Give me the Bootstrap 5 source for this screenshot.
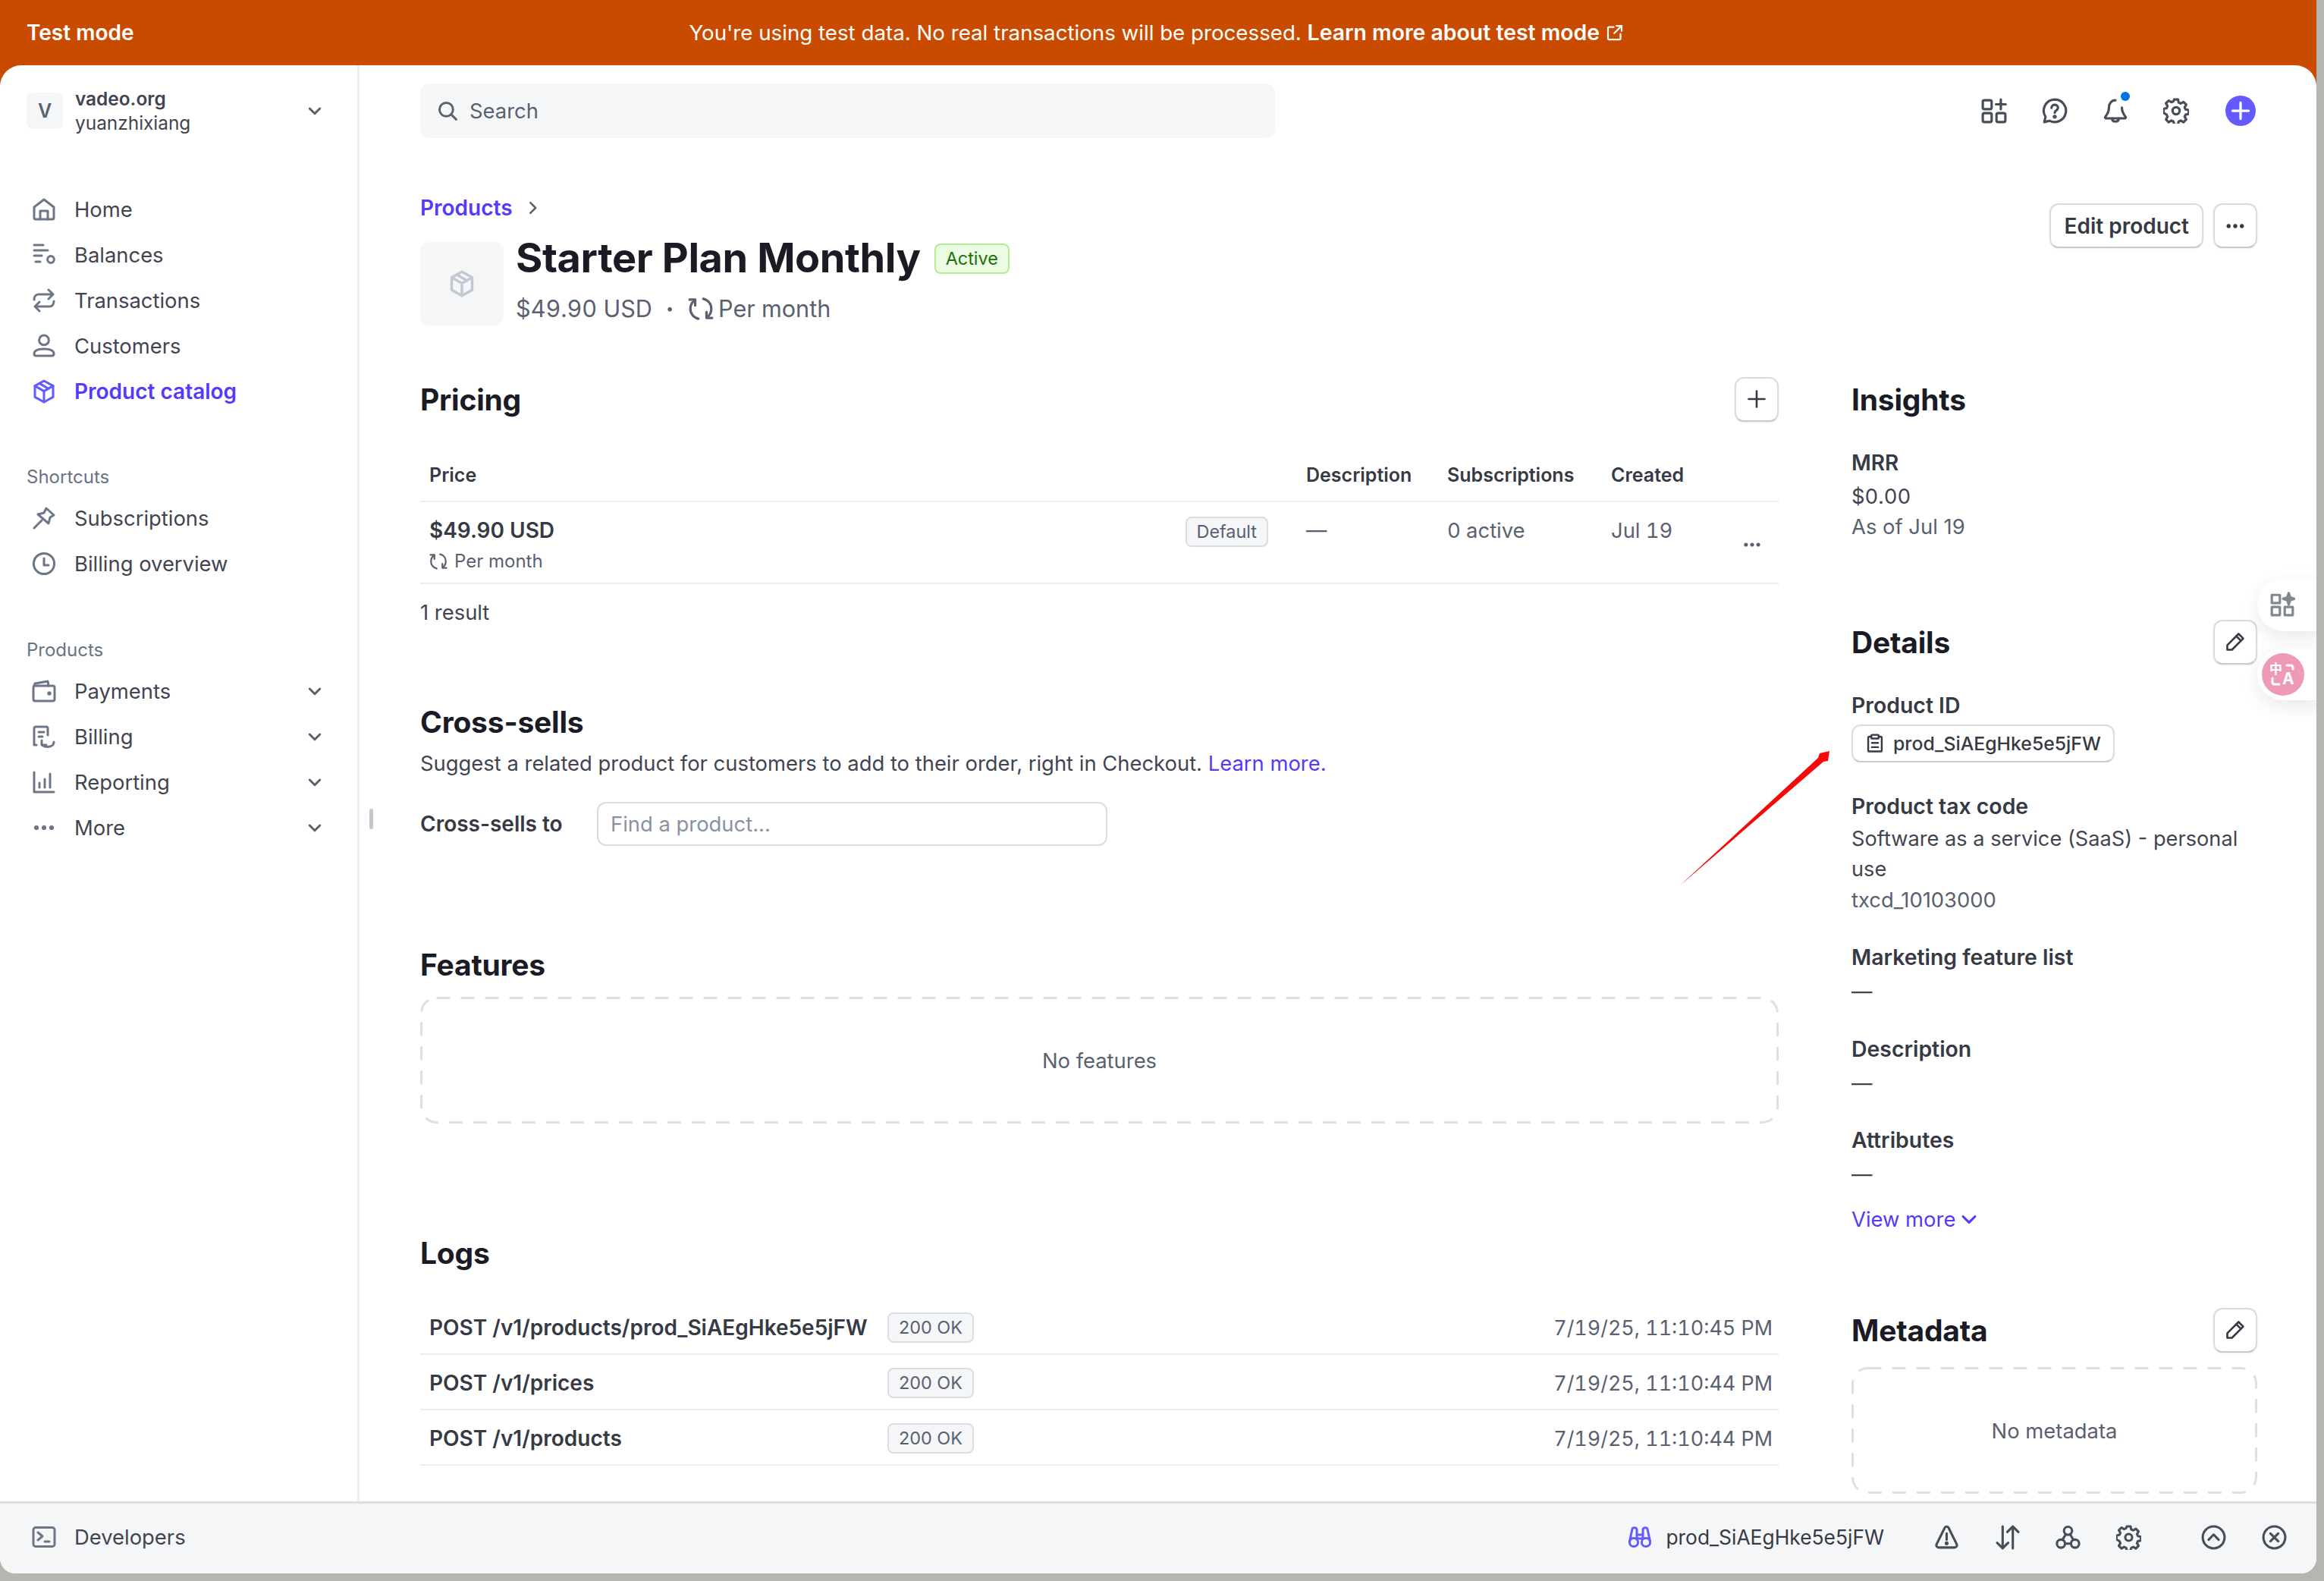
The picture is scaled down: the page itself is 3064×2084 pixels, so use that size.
<!DOCTYPE html>
<html lang="en">
<head>
<meta charset="utf-8">
<title>Starter Plan Monthly</title>
<link href="https://cdn.jsdelivr.net/npm/bootstrap@5.3.0/dist/css/bootstrap.min.css" rel="stylesheet">
<style>
html,body{height:100%;margin:0;overflow:hidden}
body{background:#b4b6b2;font-family:Inter,"Liberation Sans",sans-serif;font-size:27.4px;line-height:40px;color:#414552}
.nums{font-variant-numeric:tabular-nums}
svg.ic{fill:none;stroke:currentColor;stroke-width:1.5;stroke-linecap:round;stroke-linejoin:round;flex:none;display:block}
.app-window{width:3054px;height:2074px;background:#c94b00;border-bottom-left-radius:20px;border-bottom-right-radius:20px;overflow:hidden;position:relative}
.mode-bar{height:86px;color:#fff;padding-left:35px;position:relative;font-size:27.7px}
.mode-label{font-weight:600;font-size:28px}
.mode-msg{flex:1;text-align:center;padding-right:35px;margin-left:-146px}
.mode-msg b{font-weight:600;font-size:28.4px}
.shell{height:1988px;background:#fff;border-radius:28px 28px 0 0;overflow:hidden}
.middle{height:1893px;overflow:hidden}
.side-col{width:474px;flex:none;border-right:3px solid #ebeef1;padding-left:35px;position:relative}
.acct{height:48px;margin-top:36px;margin-bottom:76px;padding-right:44px}
.acct-tile{width:48px;height:48px;background:#f5f6f8;border-radius:8px;font-weight:600;font-size:25px;color:#596171;margin-right:16px}
.acct-text{font-size:24.4px;line-height:32px}
.acct-text b{font-weight:600;color:#414552;display:block}
.acct-text span{display:block}
.nav-line{height:60px;color:#414552;text-decoration:none;padding-left:7px;padding-right:44px}
.nav-line svg.ic{color:#6c7688;width:32px;height:32px;margin-right:24px}
.nav-line svg.chev{width:24px;height:24px;margin:0 0 0 auto;color:#596171;stroke-width:2}
.nav-line.on{color:#533afd;font-weight:600;font-size:28px}
.nav-line.on svg.ic{color:#635bff}
.side-label{font-size:24px;color:#687385;height:40px;line-height:40px;margin-bottom:4px}
.side-shortcuts{margin-top:63px}
.side-products{margin-top:64px}
.side-handle{position:absolute;left:487px;top:980px;width:5px;height:27px;background:#c3c8cf;border-radius:3px}
.main-col{flex:1;min-width:0;padding:24px 78px 0 80px;position:relative}
.top-line{height:72px}
.search-box{width:1127px;height:72px;background:#f5f6f8;border-radius:12px;padding-left:23px;color:#596171}
.search-box svg{width:26px;height:26px;margin-right:16px;stroke-width:1.8}
.search-box input{border:0;background:transparent;box-shadow:none;padding:0;font-size:27.4px;height:72px;color:#596171}
.search-box input::placeholder{color:#596171}
.tool-ic{color:#474e5a;width:34px;height:34px}
.tools{gap:46px;padding-right:2px}
.add-btn{width:40px;height:40px;border-radius:50%;background:#635bff;color:#fff;margin-left:2px}
.bell-wrap{position:relative;width:34px;height:34px}
.bell-dot{position:absolute;right:-2px;top:-8px;width:12px;height:12px;background:#0073e6;border-radius:50%}
.crumb{height:40px;margin-top:72px}
.crumb a{color:#533afd;font-weight:600;text-decoration:none;font-size:28px}
.crumb svg{width:22px;height:22px;margin-left:15px;color:#596171;stroke-width:1.8}
.head-line{margin-top:25px;height:110px}
.prod-tile{width:110px;height:110px;background:#f5f6f8;border-radius:12px;color:#c0c8d2;margin-right:16px}
.prod-tile svg{width:36px;height:36px}
.prod-title{font-size:54px;line-height:44px;font-weight:700;color:#1a1b25;letter-spacing:-.4px;margin-top:-1px;white-space:nowrap}
.tag-live{background:#ecfbe3;border:2px solid #b4ec93;color:#217005;font-size:23.4px;font-weight:400;border-radius:8px;padding:0 13px;height:40px;line-height:36px;margin-left:18px}
.prod-sub{font-size:30.6px;color:#596171;margin-top:25px;line-height:40px;font-variant-numeric:tabular-nums}
.prod-sub svg{width:34px;height:34px;margin-right:6px}
.sep-dot{margin:0 19px 0 18px;font-size:18px}
.act-btns{gap:13px;position:absolute;right:78px;top:182px}
.plain-btn{background:#fff;border:2px solid #d8dce2;border-bottom-color:#c6cbd3;border-radius:12px;font-weight:600;font-size:28px;line-height:40px;color:#353a44;height:59px;padding:0 17px;box-shadow:0 1px 2px rgba(0,0,0,.08)}
.icon-btn{width:58px;height:59px;padding:0;display:flex;align-items:center;justify-content:center}
.icon-btn svg{width:28px;height:28px}
.cols{margin-top:67px;gap:96px}
.left-pane{width:1791px;flex:none}
.right-pane{width:535px;flex:none}
.sec-head{height:60px;font-size:39px;line-height:61px;font-weight:700;color:#1a1b25;margin:0;letter-spacing:-.2px}
.tbl-price{table-layout:fixed;margin:35px 0 0;width:1791px}
.tbl-price th,.tbl-price td{padding:0;border-color:#ebeef1;border-bottom-width:2px;color:#414552;background:transparent;box-shadow:none}
.tbl-price th{height:70px;font-size:25px;font-weight:600;vertical-align:middle;color:#353a44}
.tbl-price td{height:108px;vertical-align:top;padding-top:17px;color:#596171}
.tbl-price .first{padding-left:12px}
.cell-price{font-weight:600;color:#353a44;font-size:28px}
.cell-per{font-size:24px;color:#596171;margin-top:1px;line-height:40px}
.cell-per svg{width:24px;height:24px;margin-right:9px}
.tag-soft{background:#f5f6f8;border:2px solid #d8dee4;border-radius:8px;color:#596171;font-size:23.4px;font-weight:400;height:40px;line-height:36px;padding:0 13px}
.tag-slot{margin-left:auto;margin-right:42px}
.row-more{width:26px;height:26px;color:#596171;margin-top:26px;margin-left:27px}
.result-line{margin-top:17px}
.cross-head{margin-top:94px}
.cross-sub{margin-top:5px;color:#414552}
.cross-sub a{color:#533afd;text-decoration:none}
.cross-row{margin-top:31px;height:58px}
.cross-label{font-weight:600;color:#353a44;width:233px;flex:none;font-size:28px}
.cross-input{width:673px;height:58px;border:2px solid #d8dce2;border-radius:12px;font-size:27.4px;padding:0 16px;color:#596171;box-shadow:none}
.cross-input::placeholder{color:#8792a2}
.feat-head{margin-top:126px}
.empty-box{position:relative;color:#596171}
.dash-line{position:absolute;left:0;top:0;fill:none;stroke:#dde1e6;stroke-width:3;stroke-dasharray:18 14}
.feat-box{margin-top:13px;height:167px}
.logs-head{margin-top:140px}
.log-list{margin-top:32px}
.log-line{height:73px;border-bottom:2px solid #ebeef1;padding:3px 8px 0 12px;font-weight:600;color:#353a44;font-size:28px}
.log-path{width:604px;flex:none;white-space:nowrap}
.log-time{margin-left:auto;font-weight:400;color:#596171;font-size:26.9px;font-variant-numeric:tabular-nums}
.insight-mrr{margin-top:34px;font-weight:600;color:#353a44;font-size:28px}
.val{color:#414552}
.val-gap{margin-top:4px}
.muted-val{color:#596171}
.detail-head{margin-top:103px;height:58px}
.detail-head .sec-head{height:58px;line-height:60px}
.det-label{font-weight:600;color:#353a44;margin-top:35px;font-size:28.4px}
.det-tax{margin-top:38px}
.det-plus{margin-top:36px}
.id-pill{display:inline-flex;align-items:center;height:50px;margin-top:5px;border:2px solid #d8dce2;border-bottom-color:#c6cbd3;border-radius:12px;padding:0 16px;font-size:24.8px;font-weight:500;color:#353a44}
.id-pill svg{width:26px;height:26px;margin-right:11px}
.tax-val{margin-top:3px;font-size:27.2px}
.dash-val{margin-top:5px}
.view-link{color:#533afd;text-decoration:none;margin-top:19px}
.view-link svg{width:28px;height:28px;margin-left:4px;stroke-width:1.8}
.meta-head{margin-top:97px}
.meta-box{margin-top:20px;height:167px}
.dev-bar{height:95px;background:#f5f6f8;border-top:3px solid #d8dee4;padding:0 39px 4px 42px}
.dev-left svg{width:32px;height:32px;margin-right:24px;color:#6c7688}
.dev-id{color:#353a44;margin-right:66px;font-size:26.4px}
.dev-id svg{width:32px;height:32px;color:#635bff;margin-right:18px}
.dev-tools{gap:47px}
.dev-tools svg{width:33px;height:33px;color:#474e5a}
.dev-end{margin-left:32px}
.float-card{position:absolute;right:-10px;background:#fff;box-shadow:0 8px 24px rgba(0,0,0,.09);width:88px}
.float-a{top:762px;height:70px;border-radius:36px 0 0 36px;padding-left:16px}
.float-b{top:855px;height:68px;border-radius:34px 0 0 34px;padding-left:6px}
.float-a svg{width:34px;height:34px;color:#7f8790}
.float-disc{position:relative;width:56px;height:56px;background:#ee9ab5;border-radius:50%;color:#fff;font-weight:700}
.float-disc svg{position:absolute;left:0;top:0;width:56px;height:56px;stroke-width:3}
.zh-char{position:absolute;left:10px;top:9px;font:700 17px/22px "Noto Sans CJK SC",sans-serif}
.en-char{position:absolute;left:27px;top:23px;font:700 21px/22px Inter,sans-serif}
.mark-arrow{position:absolute;left:2200px;top:980px;width:230px;height:200px;pointer-events:none}
</style>
</head>
<body>
<svg width="0" height="0" class="d-none" aria-hidden="true">
<symbol id="i-chev" viewBox="0 0 16 16"><path d="M3.500 6 8 10.500 12.500 6"/></symbol>
<symbol id="i-dots" viewBox="0 0 16 16"><circle cx="3" cy="8" r=".8" fill="currentColor"/><circle cx="8" cy="8" r=".8" fill="currentColor"/><circle cx="13" cy="8" r=".8" fill="currentColor"/></symbol>
<symbol id="i-gear" viewBox="0 0 16 16"><circle cx="8" cy="8" r="2.200"/><path d="M6.800 1h2.400l.4 1.900 1.300.6 1.700-1 1.700 1.700-1 1.700.6 1.300 1.900.4v2.400l-1.900.4-.6 1.300 1 1.700-1.700 1.700-1.700-1-1.300.6-.4 1.900H6.800l-.4-1.900-1.300-.6-1.700 1-1.700-1.700 1-1.700-.6-1.300L.2 9.200V6.800l1.900-.4.6-1.300-1-1.700 1.700-1.700 1.700 1 1.300-.6z"/></symbol>
<symbol id="i-cycle" viewBox="0 0 16 16"><path d="M6.500 14.200C3.500 13.500 1.500 11 1.500 8c0-2.200 1-4.100 2.800-5.300"/><path d="M4.500 6V2.300H1"/><path d="M9.500 1.800c3 .7 5 3.200 5 6.200 0 2.200-1 4.100-2.800 5.300"/><path d="M11.500 10v3.700H15"/></symbol>
<symbol id="i-box" viewBox="0 0 16 16"><path d="M8 1l6 3.300v7.400L8 15l-6-3.300V4.300z"/><path d="M2 4.300 8 7.800l6-3.500M8 7.800V15M5 2.700l6 3.500"/></symbol>
<symbol id="i-pen" viewBox="0 0 16 16"><path d="M10.500 2 14 5.500 5.500 14H2v-3.500z"/><path d="M8.800 3.700l3.500 3.500"/></symbol>
<symbol id="i-clip" viewBox="0 0 16 16"><path d="M5 2.500H3.500a1 1 0 0 0-1 1v10a1 1 0 0 0 1 1h9a1 1 0 0 0 1-1v-10a1 1 0 0 0-1-1H11"/><rect x="5" y="1" width="6" height="3" rx=".8"/><path d="M5.500 7.500h5M5.500 11h5"/></symbol>
</svg>

<div class="app-window">
  <div class="mode-bar d-flex align-items-center">
    <span class="mode-label">Test mode</span>
    <div class="mode-msg d-flex align-items-center justify-content-center">You're using test data. No real transactions will be processed.&nbsp;<b>Learn more about test mode</b>
      <svg class="ic ms-2" width="24" height="24" viewBox="0 0 16 16"><path d="M7 3H3a1 1 0 0 0-1 1v9a1 1 0 0 0 1 1h9a1 1 0 0 0 1-1V9M9.500 2H14v4.500M14 2 7.500 8.500"/></svg>
    </div>
  </div>
  <div class="shell d-flex flex-column">
    <div class="middle d-flex">
      <aside class="side-col">
        <div class="acct d-flex align-items-center">
          <div class="acct-tile d-flex align-items-center justify-content-center">V</div>
          <div class="acct-text"><b>vadeo.org</b><span>yuanzhixiang</span></div>
          <svg class="ic ms-auto" style="width:24px;height:24px;stroke-width:2;color:#596171"><use href="#i-chev"/></svg>
        </div>
        <a class="nav-line d-flex align-items-center" href="#"><svg class="ic" viewBox="0 0 16 16"><path d="M1.500 6.500 8 1.500l6.500 5v7a1 1 0 0 1-1 1h-11a1 1 0 0 1-1-1z"/><path d="M5.500 14.500V9h5v5.500"/></svg>Home</a>
        <a class="nav-line d-flex align-items-center" href="#"><svg class="ic" viewBox="0 0 16 16"><path d="M1.500 1.500h6M1.500 5h9M1.500 8.500h5M2.500 12.500h3"/><circle cx="12.500" cy="11" r="2.200"/></svg>Balances</a>
        <a class="nav-line d-flex align-items-center" href="#"><svg class="ic" viewBox="0 0 16 16"><path d="M1.500 7.500c0-2 1-3.500 3-3.500h9.500M11 1l3 3-3 3M14.500 8.500c0 2-1 3.500-3 3.500H2M5 9l-3 3 3 3"/></svg>Transactions</a>
        <a class="nav-line d-flex align-items-center" href="#"><svg class="ic" viewBox="0 0 16 16"><circle cx="8" cy="4.200" r="3.200"/><path d="M1.500 13.300c0-2.300 3-3.300 6.500-3.300s6.500 1 6.500 3.300c0 .8-.4 1.200-1.200 1.200H2.700c-.8 0-1.200-.4-1.200-1.200z"/></svg>Customers</a>
        <a class="nav-line on d-flex align-items-center" href="#"><svg class="ic"><use href="#i-box"/></svg>Product catalog</a>

        <div class="side-label side-shortcuts">Shortcuts</div>
        <a class="nav-line d-flex align-items-center" href="#"><svg class="ic" viewBox="0 0 16 16"><path d="M9.500 1.500 14.500 6 12 7.500 11 11.500 4 5.500 8 4.500z"/><path d="M1.500 14.500 6.500 9.500"/></svg>Subscriptions</a>
        <a class="nav-line d-flex align-items-center" href="#"><svg class="ic" viewBox="0 0 16 16"><circle cx="8" cy="8" r="6.800"/><path d="M8 4.500V9h3"/></svg>Billing overview</a>

        <div class="side-label side-products">Products</div>
        <a class="nav-line d-flex align-items-center" href="#"><svg class="ic" viewBox="0 0 16 16"><rect x="1" y="4.500" width="14" height="10" rx="1.200"/><path d="M1.500 4.500 2 3l8.500-1.500.5 3"/><circle cx="11.500" cy="9.500" r=".6" fill="currentColor"/></svg>Payments<svg class="ic chev"><use href="#i-chev"/></svg></a>
        <a class="nav-line d-flex align-items-center" href="#"><svg class="ic" viewBox="0 0 16 16"><path d="M1.500 13.500V2.500a1 1 0 0 1 1-1h7a1 1 0 0 1 1 1V7M4.500 5h3.500M4.500 8h2.500M1.500 13.500h1.500"/><path d="M6.500 10.500v3h3"/><path d="M7 13.500c.8 1 2 1.200 3.500 1.200 2 0 4-1 4-3.200"/></svg>Billing<svg class="ic chev"><use href="#i-chev"/></svg></a>
        <a class="nav-line d-flex align-items-center" href="#"><svg class="ic" viewBox="0 0 16 16"><path d="M1.500 1.500v13h13M5 8.500v3M8.500 6v5.500M12 2.500v9"/></svg>Reporting<svg class="ic chev"><use href="#i-chev"/></svg></a>
        <a class="nav-line d-flex align-items-center" href="#"><svg class="ic"><use href="#i-dots"/></svg>More<svg class="ic chev"><use href="#i-chev"/></svg></a>
        <span class="side-handle"></span>
      </aside>
      <main class="main-col flex-grow-1">
        <div class="top-line d-flex align-items-center justify-content-between">
          <div class="search-box d-flex align-items-center">
            <svg class="ic" viewBox="0 0 16 16"><circle cx="7" cy="7" r="5.500"/><path d="M11 11l4 4"/></svg>
            <input class="form-control" type="text" placeholder="Search" aria-label="Search">
          </div>
          <div class="tools d-flex align-items-center">
            <svg class="ic tool-ic" viewBox="0 0 16 16"><rect x="1" y="1.500" width="5.500" height="5.500" rx="1"/><rect x="1" y="9.500" width="5.500" height="5.500" rx="1"/><rect x="9.500" y="9.500" width="5.500" height="5.500" rx="1"/><path d="M12.200 1v6M9.200 4h6"/></svg>
            <svg class="ic tool-ic" viewBox="0 0 16 16"><path d="M8 1a7 7 0 1 1-3.300 13.200L1.500 15l.8-3.200A7 7 0 0 1 8 1z"/><path d="M6 6.200C6 5 7 4.300 8 4.300s2 .7 2 1.900c0 1.500-2 1.700-2 3"/><circle cx="8" cy="11.700" r=".5" fill="currentColor"/></svg>
            <div class="bell-wrap"><svg class="ic tool-ic" viewBox="0 0 16 16"><path d="M8 1.500C5.500 1.500 4 3.500 4 6c0 3-1.300 4.500-2.300 5.800-.2.400 0 .9.500.9h11.600c.5 0 .7-.5.500-.9C13.300 10.500 12 9 12 6"/><path d="M6 12.700c0 1.200.8 2 2 2s2-.8 2-2"/></svg><span class="bell-dot"></span></div>
            <svg class="ic tool-ic"><use href="#i-gear"/></svg>
            <div class="add-btn d-flex align-items-center justify-content-center"><svg class="ic" width="26" height="26" viewBox="0 0 16 16" style="stroke-width:2"><path d="M8 1.500v13M1.500 8h13"/></svg></div>
          </div>
        </div>

        <div class="crumb d-flex align-items-center"><a href="#">Products</a><svg class="ic" viewBox="0 0 16 16"><path d="M6 3l5 5-5 5"/></svg></div>
        <div class="head-line d-flex">
          <div class="prod-tile d-flex align-items-center justify-content-center"><svg class="ic"><use href="#i-box"/></svg></div>
          <div>
            <div class="d-flex align-items-center"><h1 class="prod-title mb-0">Starter Plan Monthly</h1><span class="badge tag-live">Active</span></div>
            <div class="prod-sub d-flex align-items-center">$49.90 USD<span class="sep-dot">•</span><svg class="ic"><use href="#i-cycle"/></svg>Per month</div>
          </div>
        </div>
        <div class="act-btns d-flex">
          <button class="btn plain-btn" type="button">Edit product</button>
          <button class="btn plain-btn icon-btn" type="button" aria-label="More"><svg class="ic"><use href="#i-dots"/></svg></button>
        </div>

        <div class="cols d-flex">
          <div class="left-pane">
            <div class="d-flex align-items-center justify-content-between">
              <h2 class="sec-head">Pricing</h2>
              <button class="btn plain-btn icon-btn" type="button" aria-label="Add"><svg class="ic" viewBox="0 0 16 16"><path d="M8 2v12M2 8h12"/></svg></button>
            </div>
            <table class="table tbl-price">
              <colgroup><col style="width:1160px"><col style="width:186px"><col style="width:216px"><col style="width:154px"><col style="width:75px"></colgroup>
              <thead><tr><th class="first">Price</th><th class="ps-2">Description</th><th class="ps-2">Subscriptions</th><th class="ps-2">Created</th><th></th></tr></thead>
              <tbody><tr>
                <td class="first">
                  <div class="d-flex"><div><div class="cell-price">$49.90 USD</div><div class="cell-per d-flex align-items-center"><svg class="ic"><use href="#i-cycle"/></svg>Per month</div></div>
                  <div class="tag-slot"><span class="badge tag-soft">Default</span></div></div>
                </td>
                <td class="ps-2">—</td><td class="ps-2 nums">0 active</td><td class="ps-2 nums">Jul 19</td>
                <td><svg class="ic row-more"><use href="#i-dots"/></svg></td>
              </tr></tbody>
            </table>
            <div class="result-line">1 result</div>

            <h2 class="sec-head cross-head">Cross-sells</h2>
            <div class="cross-sub">Suggest a related product for customers to add to their order, right in Checkout. <a href="#">Learn more.</a></div>
            <div class="cross-row d-flex align-items-center"><label class="cross-label">Cross-sells to</label><input class="form-control cross-input" type="text" placeholder="Find a product..."></div>

            <h2 class="sec-head feat-head">Features</h2>
            <div class="empty-box feat-box d-flex align-items-center justify-content-center"><svg class="dash-line" width="1791" height="167"><rect x="1.500" y="1.500" width="1788" height="164" rx="20"/></svg>No features</div>

            <h2 class="sec-head logs-head">Logs</h2>
            <div class="log-list">
              <div class="log-line d-flex align-items-center"><span class="log-path">POST /v1/products/prod_SiAEgHke5e5jFW</span><span class="badge tag-soft">200 OK</span><span class="log-time">7/19/25, 11:10:45 PM</span></div>
              <div class="log-line d-flex align-items-center"><span class="log-path">POST /v1/prices</span><span class="badge tag-soft">200 OK</span><span class="log-time">7/19/25, 11:10:44 PM</span></div>
              <div class="log-line d-flex align-items-center"><span class="log-path">POST /v1/products</span><span class="badge tag-soft">200 OK</span><span class="log-time">7/19/25, 11:10:44 PM</span></div>
            </div>
          </div>
          <div class="right-pane">
            <h2 class="sec-head">Insights</h2>
            <div class="insight-mrr">MRR</div>
            <div class="val val-gap nums">$0.00</div>
            <div class="muted-val">As of Jul 19</div>

            <div class="detail-head d-flex align-items-center justify-content-between">
              <h2 class="sec-head">Details</h2>
              <button class="btn plain-btn icon-btn" type="button" aria-label="Edit"><svg class="ic"><use href="#i-pen"/></svg></button>
            </div>
            <div class="det-label">Product ID</div>
            <div class="id-pill"><svg class="ic"><use href="#i-clip"/></svg>prod_SiAEgHke5e5jFW</div>
            <div class="det-label det-tax">Product tax code</div>
            <div class="val tax-val">Software as a service (SaaS) - personal use</div>
            <div class="muted-val">txcd_10103000</div>
            <div class="det-label det-plus">Marketing feature list</div>
            <div class="val dash-val">—</div>
            <div class="det-label det-plus">Description</div>
            <div class="val dash-val">—</div>
            <div class="det-label">Attributes</div>
            <div class="val dash-val">—</div>
            <a class="view-link d-flex align-items-center" href="#">View more<svg class="ic"><use href="#i-chev"/></svg></a>

            <div class="detail-head meta-head d-flex align-items-center justify-content-between">
              <h2 class="sec-head">Metadata</h2>
              <button class="btn plain-btn icon-btn" type="button" aria-label="Edit"><svg class="ic"><use href="#i-pen"/></svg></button>
            </div>
            <div class="empty-box meta-box d-flex align-items-center justify-content-center"><svg class="dash-line" width="535" height="167"><rect x="1.500" y="1.500" width="532" height="164" rx="20"/></svg>No metadata</div>
          </div>
        </div>
      </main>
    </div>
    <div class="dev-bar d-flex align-items-center">
      <div class="dev-left d-flex align-items-center"><svg class="ic" viewBox="0 0 16 16"><rect x="1" y="1.800" width="14" height="12.400" rx="1.500"/><path d="M4 5l3 2.500L4 10M8.500 11h3"/></svg>Developers</div>
      <div class="dev-id d-flex align-items-center ms-auto"><svg class="ic" viewBox="0 0 16 16"><circle cx="4" cy="11.500" r="2.800"/><circle cx="12" cy="11.500" r="2.800"/><path d="M1.200 11 3 2.800C3.200 1.500 5.500 1.500 6 2.800v6M14.800 11 13 2.800c-.2-1.300-2.500-1.300-3 0v6M6 6.500h4M6 9h4"/></svg>prod_SiAEgHke5e5jFW</div>
      <div class="dev-tools d-flex align-items-center">
        <svg class="ic" viewBox="0 0 16 16"><path d="M6.800 1.800c.5-.9 1.900-.9 2.400 0l5.200 10.500c.5 1.100-.2 2.200-1.400 2.200H3c-1.200 0-1.900-1.100-1.400-2.200z"/><path d="M8 5.500v4"/><circle cx="8" cy="11.800" r=".5" fill="currentColor"/></svg>
        <svg class="ic" viewBox="0 0 16 16"><path d="M5 1v14M1.500 11.500 5 15l3.500-3.500M11.500 15V1M8 4.500 11.500 1 15 4.500"/></svg>
        <svg class="ic" viewBox="0 0 16 16"><circle cx="8" cy="3.800" r="2.600"/><circle cx="3.500" cy="12" r="2.600"/><circle cx="12.500" cy="12" r="2.600"/><path d="M6.600 6 4.500 9.500M9.300 6l2 3.300M6 12h4"/></svg>
        <svg class="ic"><use href="#i-gear"/></svg>
        <svg class="ic dev-end" viewBox="0 0 16 16"><circle cx="8" cy="8" r="7"/><path d="M4.800 9.500 8 6.200l3.200 3.300"/></svg>
        <svg class="ic" viewBox="0 0 16 16"><circle cx="8" cy="8" r="7"/><path d="M5.500 5.500l5 5M10.500 5.500l-5 5"/></svg>
      </div>
    </div>
  </div>
  <div class="float-card float-a d-flex align-items-center"><svg class="ic" viewBox="0 0 16 16"><rect x="1.500" y="2" width="5" height="5"/><rect x="1.500" y="9.500" width="5" height="5"/><rect x="9.500" y="9.500" width="5" height="5"/><path d="M12 .8l.9 2.700 2.600.9-2.600.9-.9 2.700-.9-2.700-2.600-.9 2.600-.9z" fill="currentColor"/></svg></div>
  <div class="float-card float-b d-flex align-items-center"><div class="float-disc"><span class="zh-char">中</span><span class="en-char">A</span><svg class="ic" viewBox="0 0 56 56"><path d="M33 16h5c2 0 3 1 3 3v2M14 33v5c0 2 1 3 3 3h6"/></svg></div></div>
</div>
<svg class="mark-arrow" viewBox="2200 980 230 200"><polygon points="2214,1168 2397,999 2399,993 2412,990 2410,1003 2404,1004" fill="#f50a0a"/></svg>
</body>
</html>
